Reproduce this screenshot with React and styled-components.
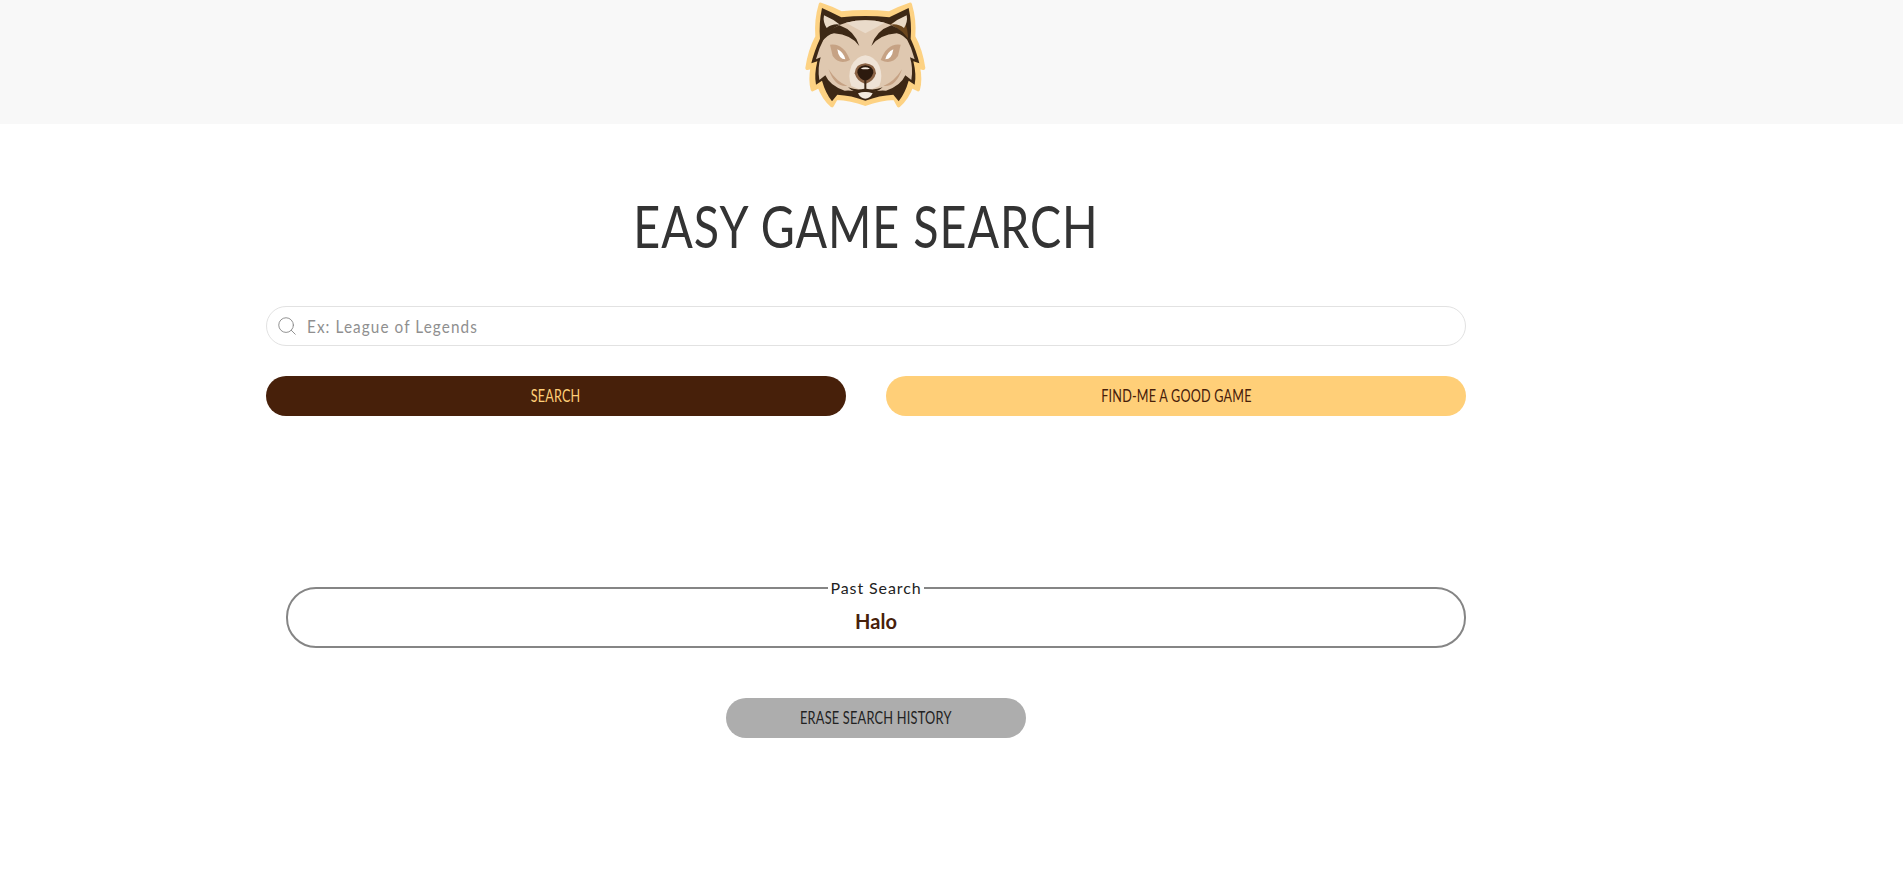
import styled, { createGlobalStyle } from "styled-components";
import { Search } from "lucide-react";

const FONT = 'Lato, "Liberation Sans", sans-serif';

const GlobalStyle = createGlobalStyle`
  * {
    box-sizing: border-box;
  }
  html, body {
    margin: 0;
    background: #fff;
    font-family: ${FONT};
  }
`;

const MIRROR = "matrix(-1 0 0 1 516 0)";

const LogoSide = () => (
  <>
    <path fill="#e9d9c6" d="M134 46 Q162 58 182 74 Q160 70 142 84 Q130 66 134 46 Z" />
    <path fill="#3d2815" d="M180 76 Q226 92 240 138 Q216 104 164 100 Q144 102 120 134 Q140 90 180 76 Z" />
    <path fill="#c6a284" d="M152 134 Q192 128 212 180 Q180 196 160 168 Z" />
    <path fill="#fff" d="M174 148 Q194 158 198 178 Q178 178 174 148 Z" />
    <path fill="#c6a284" d="M148 208 Q172 246 204 258 Q166 262 148 208 Z" />
  </>
);

const Logo = () => (
  <LogoSvg viewBox="70 0 380 330" aria-label="logo">
    <path
      fill="#fdd283"
      stroke="#fdd283"
      strokeWidth="12"
      strokeLinejoin="round"
      d="M124 14 Q155 24 186 40 Q258 32 330 40 Q362 24 392 14 Q406 60 402 110 Q424 150 432 204 L416 200 Q424 240 416 268 L396 258 Q384 292 358 316 L346 294 Q300 296 258 312 Q216 296 170 294 L158 316 Q132 292 120 258 L100 268 Q92 240 100 200 L84 204 Q92 150 114 110 Q110 60 124 14 Z"
    />
    <path
      fill="#3d2815"
      d="M128 24 Q155 36 186 52 Q258 44 330 52 Q362 36 388 24 Q398 70 394 116 Q412 155 420 190 L402 184 Q412 225 406 254 L388 242 Q378 278 358 304 L342 284 Q300 286 258 302 Q216 286 174 284 L158 304 Q138 278 128 242 L110 254 Q104 225 114 184 L96 190 Q104 155 122 116 Q118 70 128 24 Z"
    />
    <path fill="#8a5a24" opacity="0.6" d="M290 110 Q320 70 372 56 Q388 90 386 122 Q340 90 290 130 Z" />
    <path
      fill="#dfc8b0"
      d="M200 68 Q258 54 316 68 Q356 78 380 112 Q398 145 406 178 L392 172 Q402 205 396 240 L378 226 Q364 258 320 272 Q290 270 258 280 Q226 270 196 272 Q152 258 138 226 L120 240 Q114 205 124 172 L110 178 Q118 145 136 112 Q160 78 200 68 Z"
    />
    <path fill="#eadbca" d="M200 68 Q258 54 316 68 Q288 84 258 100 Q228 84 200 68 Z" />
    <LogoSide />
    <g transform={MIRROR}>
      <LogoSide />
    </g>
    <path
      fill="#efe3d6"
      d="M258 166 Q285 168 300 198 Q312 228 300 258 Q280 268 258 272 Q236 268 216 258 Q204 228 216 198 Q232 168 258 166 Z"
    />
    <path fill="#8a6244" d="M258 190 Q288 192 290 220 Q284 244 258 252 Q232 244 226 220 Q228 192 258 190 Z" />
    <path fill="#2c1a0e" d="M258 196 Q282 198 282 218 Q276 238 258 242 Q240 238 234 218 Q234 198 258 196 Z" />
    <path fill="#f4eadf" d="M244 206 Q258 198 272 206 Q258 210 244 206 Z" />
    <path
      fill="#3d2815"
      d="M255 240 H261 V266 Q285 272 310 262 Q285 284 258 276 Q231 284 206 262 Q231 272 255 266 Z"
    />
    <path fill="#f4eadf" d="M236 280 Q258 272 280 280 Q272 296 258 296 Q244 296 236 280 Z" />
  </LogoSvg>
);

const App = () => {
  return (
    <>
      <GlobalStyle />
      <Header>
        <Logo />
      </Header>
      <Main>
        <Title>
          <Squeeze $x={0.805}>EASY GAME SEARCH</Squeeze>
        </Title>
        <SearchBox>
          <Search size={22} strokeWidth={1} color="#888" />
          <SearchInput placeholder="Ex: League of Legends" />
        </SearchBox>
        <ButtonRow>
          <PillButton $bg="#47200a" $color="#ffcf78">
            <Squeeze $x={0.7}>SEARCH</Squeeze>
          </PillButton>
          <PillButton $bg="#ffcf78" $color="#47200a">
            <Squeeze $x={0.7}>FIND-ME A GOOD GAME</Squeeze>
          </PillButton>
        </ButtonRow>
        <PastSearch>
          <PastLegend>Past Search</PastLegend>
          <PastItem>Halo</PastItem>
        </PastSearch>
        <EraseButton>
          <Squeeze $x={0.71}>ERASE SEARCH HISTORY</Squeeze>
        </EraseButton>
      </Main>
    </>
  );
};

const Header = styled.header`
  height: 124px;
  background: #f8f8f8;
  padding-left: 266px;
  width: 100%;
  display: flex;
`;

const LogoSvg = styled.svg`
  width: 1200px;
  height: 110px;
`;

const Main = styled.main`
  width: 1200px;
  margin-left: 266px;
  display: flex;
  flex-direction: column;
`;

const Squeeze = styled.span`
  display: inline-block;
  white-space: nowrap;
  transform: scaleX(${(props) => props.$x});
`;

const Title = styled.h1`
  margin: 72px 0 0;
  height: 60px;
  font-size: 58px;
  line-height: 60px;
  font-weight: 400;
  letter-spacing: 1.2px;
  text-align: center;
  color: #333;
`;

const SearchBox = styled.div`
  margin-top: 50px;
  height: 40px;
  display: flex;
  align-items: center;
  gap: 9px;
  padding-left: 9px;
  border: 1px solid #e2e2e2;
  border-radius: 20px;
  background: #fff;
  overflow: hidden;
`;

const SearchInput = styled.input`
  flex: 1;
  border: 0;
  outline: 0;
  padding: 0;
  background: transparent;
  font-family: ${FONT};
  font-size: 17px;
  letter-spacing: 1.2px;
  color: #333;
  transform: scaleX(0.9);
  transform-origin: left center;

  &::placeholder {
    color: #8f8f8f;
    opacity: 1;
  }
`;

const ButtonRow = styled.div`
  margin-top: 30px;
  display: grid;
  grid-template-columns: 580px 580px;
  justify-content: space-between;
`;

const PillButton = styled.button`
  height: 40px;
  padding: 0 0 2px;
  border: 0;
  border-radius: 20px;
  background: ${(props) => props.$bg};
  color: ${(props) => props.$color};
  font-family: ${FONT};
  font-size: 18px;
  letter-spacing: 0.3px;
`;

const PastSearch = styled.fieldset`
  margin: 163px 0 0 20px;
  padding: 0;
  height: 69px;
  border: 2px solid #858585;
  border-radius: 30px;
  text-align: center;
`;

const PastLegend = styled.legend`
  padding: 0 2px;
  font-size: 16px;
  line-height: 18px;
  letter-spacing: 0.9px;
  color: #222;
`;

const PastItem = styled.div`
  margin-top: 10px;
  font-size: 20px;
  line-height: 28px;
  font-weight: 700;
  color: #47200a;
`;

const EraseButton = styled.button`
  align-self: center;
  margin: 50px 0 0 20px;
  padding: 0 0 2px;
  width: 300px;
  height: 40px;
  border: 0;
  border-radius: 20px;
  background: #adadad;
  color: #222;
  font-family: ${FONT};
  font-size: 18px;
  letter-spacing: 0.3px;
`;

export default App;
